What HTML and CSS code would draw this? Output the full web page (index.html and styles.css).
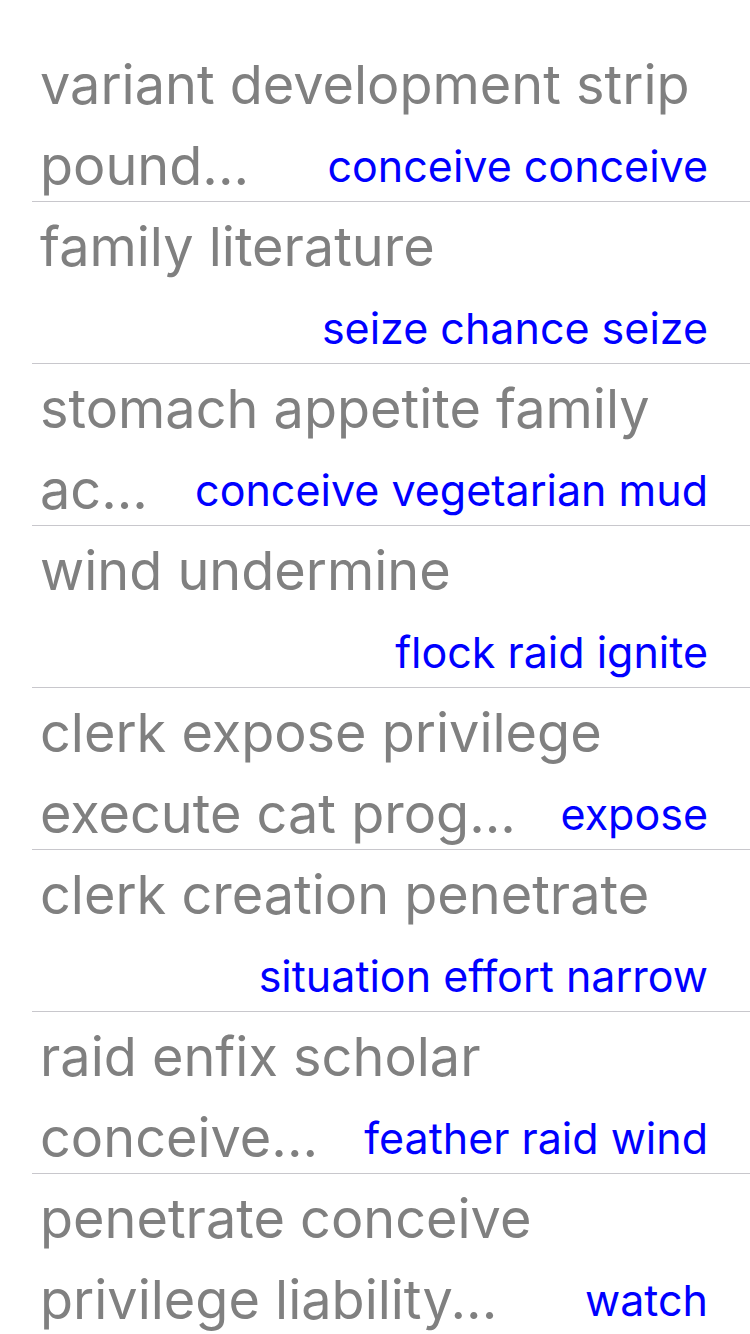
FILE: index.html
```html
<!DOCTYPE html>
<html>
<head>
<meta charset="utf-8">
<link rel="stylesheet" href="styles.css">
</head>
<body>
<ul class="list">
  <li class="row">
    <div class="line">variant development strip</div>
    <div class="line last"><span class="title">pound...</span><span class="detail">conceive conceive</span></div>
  </li>
  <li class="row">
    <div class="line">family literature</div>
    <div class="line last"><span class="title"></span><span class="detail">seize chance seize</span></div>
  </li>
  <li class="row">
    <div class="line">stomach appetite family</div>
    <div class="line last"><span class="title">ac...</span><span class="detail">conceive vegetarian mud</span></div>
  </li>
  <li class="row">
    <div class="line">wind undermine</div>
    <div class="line last"><span class="title"></span><span class="detail">flock raid ignite</span></div>
  </li>
  <li class="row">
    <div class="line">clerk expose privilege</div>
    <div class="line last"><span class="title">execute cat prog...</span><span class="detail">expose</span></div>
  </li>
  <li class="row">
    <div class="line">clerk creation penetrate</div>
    <div class="line last"><span class="title"></span><span class="detail">situation effort narrow</span></div>
  </li>
  <li class="row">
    <div class="line">raid enfix scholar</div>
    <div class="line last"><span class="title">conceive...</span><span class="detail">feather raid wind</span></div>
  </li>
  <li class="row">
    <div class="line">penetrate conceive</div>
    <div class="line last"><span class="title">privilege liability...</span><span class="detail">watch</span></div>
  </li>
</ul>
</body>
</html>
```
FILE: styles.css
```css
html, body {
  margin: 0;
  padding: 0;
  background: #ffffff;
}
body {
  font-family: Inter, "Liberation Sans", sans-serif;
  padding-top: 40px;
}
.list {
  list-style: none;
  margin: 0 0 0 32px;
  padding: 0;
}
.row {
  height: 157px;
  border-bottom: 1px solid #c8c7cc;
  padding: 4px 42px 0 8px;
}
.line {
  height: 81px;
  line-height: 81px;
  font-size: 54px;
  color: #808080;
  white-space: nowrap;
}
.line.last {
  display: flex;
  justify-content: space-between;
  align-items: flex-start;
}
.detail {
  font-size: 43px;
  line-height: 82px;
  color: #0000ff;
}
```
